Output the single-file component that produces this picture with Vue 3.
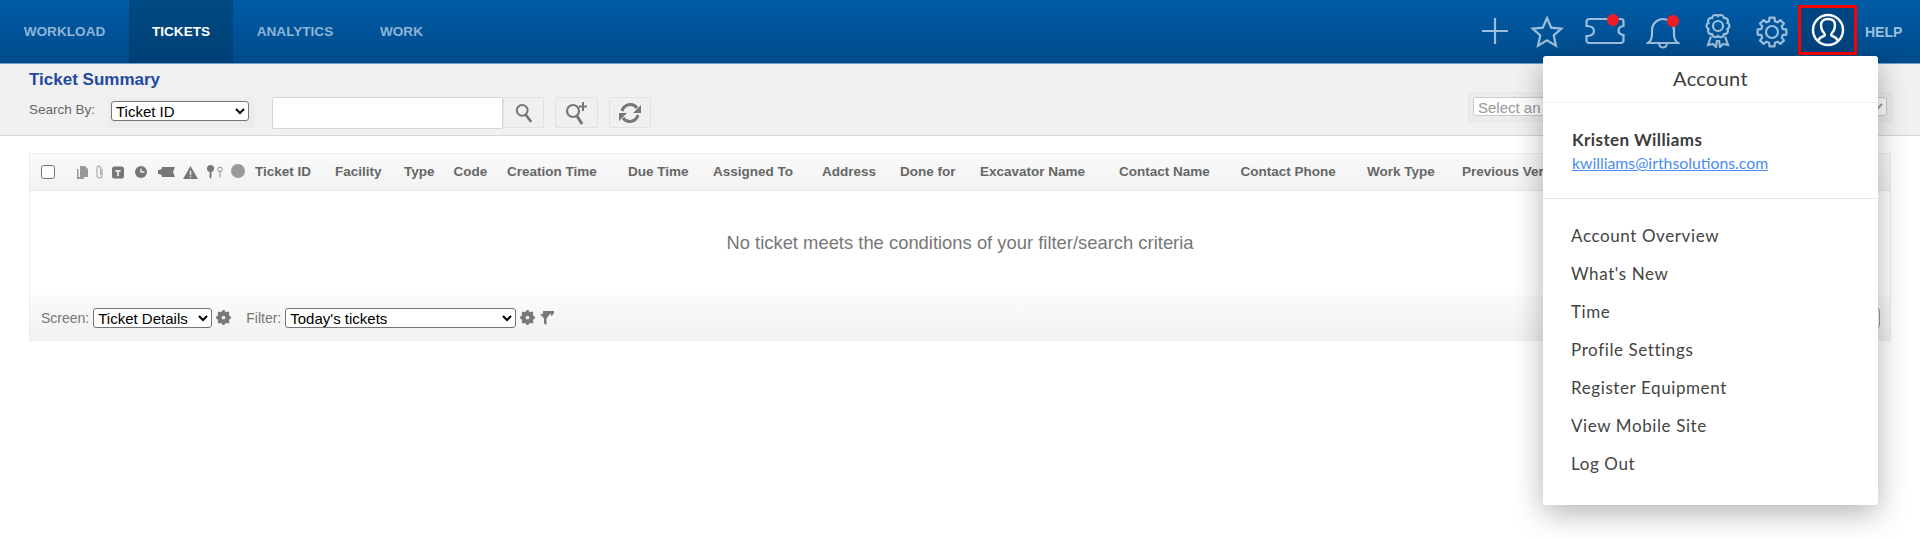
<script setup>
const nav = [
  { label: 'WORKLOAD', width: 129 },
  { label: 'TICKETS', width: 104, active: true },
  { label: 'ANALYTICS', width: 124 },
  { label: 'WORK', width: 89 }
]
const cols = [
  { t: 'Ticket ID', w: 80 },
  { t: 'Facility', w: 69 },
  { t: 'Type', w: 49.5 },
  { t: 'Code', w: 53.5 },
  { t: 'Creation Time', w: 121 },
  { t: 'Due Time', w: 85 },
  { t: 'Assigned To', w: 109 },
  { t: 'Address', w: 78 },
  { t: 'Done for', w: 80 },
  { t: 'Excavator Name', w: 139 },
  { t: 'Contact Name', w: 121.5 },
  { t: 'Contact Phone', w: 126.5 },
  { t: 'Work Type', w: 95 },
  { t: 'Previous Version', w: 150 }
]
const menu = ['Account Overview', "What's New", 'Time', 'Profile Settings', 'Register Equipment', 'View Mobile Site', 'Log Out']

const pt = (cx, cy, r, deg) => {
  const a = (deg * Math.PI) / 180
  return `${(cx + r * Math.cos(a)).toFixed(2)} ${(cy + r * Math.sin(a)).toFixed(2)}`
}
const gearPath = (() => {
  let d = ''
  for (let i = 0; i < 8; i++) {
    const c = i * 45 - 90
    d += `${i ? 'L' : 'M'}${pt(16, 16, 11.2, c - 15)} L${pt(16, 16, 14.6, c - 10)} L${pt(16, 16, 14.6, c + 10)} L${pt(16, 16, 11.2, c + 15)} `
  }
  return d + 'Z'
})()
const rosettePath = (() => {
  let d = `M${pt(13, 12, 10, -90)} `
  for (let i = 1; i <= 10; i++) {
    d += `A3.400 3.400 0 0 1 ${pt(13, 12, 10, -90 + i * 36)} `
  }
  return d + 'Z'
})()
</script>

<template>
  <div class="page">
    <header class="top">
      <nav class="nav">
        <a v-for="n in nav" :key="n.label" class="nav-item" :class="{ active: n.active }" :style="{ width: n.width + 'px' }">{{ n.label }}</a>
      </nav>
      <div class="tools">
        <svg class="ic i-plus" width="32" height="32" viewBox="0 0 32 32"><path d="M16 3v26M3 16h26" /></svg>
        <svg class="ic i-star" width="34" height="34" viewBox="0 0 34 34"><path d="M17 3l4.200 9.600 10.300 1-7.800 6.900 2.300 10.200L17 25.400l-9 5.300 2.300-10.200-7.800-6.900 10.300-1z" /></svg>
        <span class="ic-wrap w-ticket">
          <svg class="ic" width="40" height="28" viewBox="0 0 40 28"><path d="M4 2h32a2.500 2.500 0 0 1 2.500 2.500V9c-4 .5-5 2-5 4.500s1 4 5 4.500v5.500A2.500 2.500 0 0 1 36 26H4a2.500 2.500 0 0 1-2.500-2.500V19c5 0 7.500-2 7.500-5s-2.500-5-7.500-5V4.500A2.500 2.500 0 0 1 4 2z" /></svg>
          <i class="dot d1"></i>
        </span>
        <span class="ic-wrap w-bell">
          <svg class="ic" width="34" height="34" viewBox="0 0 34 34"><path d="M2 28h30c-3-2-4-5-4-9v-4c0-6-5-11-11-11S6 9 6 15v4c0 4-1 7-4 9zM13 28c0 6 8 6 8 0" /></svg>
          <i class="dot d2"></i>
        </span>
        <svg class="ic i-ribbon" width="26" height="34" viewBox="0 0 26 34"><path :d="rosettePath" /><circle cx="13" cy="12" r="5" /><path d="M6 22.500L3 31l5-1 3 3 1-7M20 22.500L23 31l-5-1-3 3-1-7" /></svg>
        <svg class="ic i-gear" width="32" height="32" viewBox="0 0 32 32"><path :d="gearPath" stroke-linejoin="round" /><circle cx="16" cy="16" r="6" /></svg>
        <span class="account">
          <svg width="34" height="34" viewBox="0 0 34 34" fill="none" stroke="#fff" stroke-width="2.400"><circle cx="17" cy="17" r="15" /><path d="M7 28c1-3 3-4 6-5 1-.5 1-2 0-3-2-2-3-5-3-8 0-4 3-6 7-6s7 2 7 6c0 3-1 6-3 8-1 1-1 2.500 0 3 3 1 5 2 6 5" /></svg>
        </span>
        <span class="help">HELP</span>
      </div>
    </header>

    <section class="toolbar">
      <h1 class="title">Ticket Summary</h1>
      <div class="search-row">
        <span class="search-label">Search By:</span>
        <span class="select-well"><select class="sel sel-id"><option>Ticket ID</option></select></span>
        <input class="search-input" type="text" />
        <button class="tbtn b1">
          <svg width="18" height="20" viewBox="0 0 20 22" fill="none" stroke="#777" stroke-width="2.200"><circle cx="8" cy="8" r="6" /><path d="M12 13l6 8" stroke-width="3" /></svg>
        </button>
        <button class="tbtn b2">
          <svg width="26" height="24" viewBox="0 0 26 24" fill="none" stroke="#777" stroke-width="2.200"><circle cx="9" cy="10" r="6" /><path d="M13 15l5 8" stroke-width="3" /><path d="M19 1v9M15 5.500h8" stroke-width="2" /></svg>
        </button>
        <button class="tbtn b3">
          <svg width="24" height="24" viewBox="0 0 24 24" fill="none" stroke="#777" stroke-width="3"><path d="M4 10a8.500 8.500 0 0 1 15-3" /><path d="M20 14a8.500 8.500 0 0 1-15 3" /><path d="M23 4v8h-8zM1 20v-8h8z" fill="#777" stroke="none" /></svg>
        </button>
        <span class="asset-well"><select class="sel asset"><option>Select an</option></select></span>
      </div>
    </section>

    <section class="grid">
      <div class="grid-head">
        <input class="check" type="checkbox" />
        <span class="mini">
          <svg width="11" height="13" viewBox="0 0 11 13" fill="#999"><path d="M0 3h1.500v8H7v2H0zM3 0h5l3 3v8H3z" /></svg>
          <svg width="9" height="14" viewBox="0 0 9 14" fill="none" stroke="#aaa" stroke-width="1.200"><path d="M7 4v6.500a2.500 2.500 0 0 1-5 0V3a1.800 1.800 0 0 1 3.600 0v7" /></svg>
          <svg width="12" height="13" viewBox="0 0 14 14"><rect width="14" height="14" rx="3" fill="#777" /><path d="M4 4h6v2H8v5H6V6H4z" fill="#eee" /></svg>
          <svg width="12" height="12" viewBox="0 0 14 14"><circle cx="7" cy="7" r="7" fill="#777" /><path d="M7 3v4h4" fill="none" stroke="#eee" stroke-width="1.500" /></svg>
          <svg width="17" height="10" viewBox="0 0 17 10" fill="#777"><path d="M4 0h13l-2 5 2 5H4c0-2-1-3-4-3V3c3 0 4-1 4-3z" /></svg>
          <svg width="15" height="13" viewBox="0 0 16 14"><path d="M8 0l8 14H0z" fill="#777" /><path d="M7.200 5h1.600v5H7.200zM7.200 11h1.600v1.500H7.200z" fill="#eee" /></svg>
          <svg width="7" height="14" viewBox="0 0 7 14" fill="#777"><circle cx="3.500" cy="3.500" r="3.500" /><path d="M2.500 6h2v6l-1 2-1-2z" /></svg>
          <svg width="6" height="14" viewBox="0 0 8 15" fill="none" stroke="#888" stroke-width="1.200"><circle cx="4" cy="4" r="3" /><path d="M4 7v8" /></svg>
          <svg class="ball" width="14" height="14" viewBox="0 0 15 15"><circle cx="7.500" cy="7.500" r="7.500" fill="#999" /></svg>
        </span>
        <span v-for="c in cols" :key="c.t" class="col" :style="{ width: c.w + 'px' }">{{ c.t }}</span>
      </div>
      <div class="grid-empty">No ticket meets the conditions of your filter/search criteria</div>
      <div class="grid-foot">
        <span class="foot-label">Screen:</span>
        <select class="sel sel-screen"><option>Ticket Details</option></select>
        <svg class="gear" width="15" height="15" viewBox="0 0 16 16"><circle cx="8" cy="8" r="5" fill="none" stroke="#777" stroke-width="3.500" /><path d="M8 0v16M0 8h16M2.300 2.300l11.400 11.400M13.700 2.300L2.300 13.700" stroke="#777" stroke-width="2.400" /><circle cx="8" cy="8" r="2" fill="#eee" /></svg>
        <span class="foot-label filter">Filter:</span>
        <select class="sel sel-filter"><option>Today's tickets</option></select>
        <svg class="gear" width="15" height="15" viewBox="0 0 16 16"><circle cx="8" cy="8" r="5" fill="none" stroke="#777" stroke-width="3.500" /><path d="M8 0v16M0 8h16M2.300 2.300l11.400 11.400M13.700 2.300L2.300 13.700" stroke="#777" stroke-width="2.400" /><circle cx="8" cy="8" r="2" fill="#eee" /></svg>
        <svg class="funnel" width="14" height="15" viewBox="0 0 14 15" fill="#777"><path d="M0 4h10L6.500 8.500V15L4 13.500V8.500zM3 1h11v2l-2.500 3.500L11 4H3z" /></svg>
        <span class="pager"></span>
      </div>
    </section>

    <aside class="panel">
      <div class="panel-head">Account</div>
      <div class="panel-user">
        <div class="user-name">Kristen Williams</div>
        <a class="user-mail">kwilliams@irthsolutions.com</a>
      </div>
      <ul class="panel-menu">
        <li v-for="m in menu" :key="m">{{ m }}</li>
      </ul>
    </aside>
  </div>
</template>

<style>
html, body { margin: 0; background: #fff; overflow: hidden; }
</style>

<style scoped>
.page {
  position: relative;
  width: 1920px;
  height: 538px;
  overflow: hidden;
  font-family: "Liberation Sans", Arial, sans-serif;
  background: #fff;
}
.top {
  height: 63px;
  display: flex;
  justify-content: space-between;
  background: linear-gradient(#005ba6, #004b8b);
  border-bottom: 1px solid #6f9fc8;
}
.nav { display: flex; }
.nav-item {
  display: flex;
  align-items: center;
  justify-content: center;
  font-size: 13.600px;
  font-weight: 700;
  color: #8fb4d6;
}
.nav-item.active {
  color: #fff;
  background: linear-gradient(#004a84, #003f75);
}
.tools { display: flex; align-items: center; }
.ic { fill: none; stroke: #9dbfdc; stroke-width: 2.200; display: block; }
.i-plus { margin-right: 19px; margin-top: -2px; }
.i-star { margin-right: 21px; }
.ic-wrap { position: relative; display: block; }
.w-ticket { margin-right: 21px; margin-top: -1px; }
.w-bell { margin-right: 25px; }
.i-ribbon { margin-right: 25px; margin-top: -1px; }
.i-gear { margin-right: 10px; }
.dot {
  position: absolute;
  width: 12px;
  height: 12px;
  border-radius: 50%;
  background: #ef1c25;
}
.d1 { right: 6px; top: -3px; }
.d2 { right: 1px; top: 0; }
.account {
  display: flex;
  align-items: center;
  justify-content: center;
  box-sizing: border-box;
  width: 59px;
  height: 50px;
  margin: -3px 8px 0 0;
  border: 3px solid #f00;
  background: #004480;
}
.help {
  width: 55px;
  font-size: 14px;
  font-weight: 700;
  color: #9dbfdc;
}
.toolbar {
  box-sizing: border-box;
  height: 72px;
  padding: 6px 0 0 29px;
  background: #f1f1f1;
  border-bottom: 1px solid #d6d6d6;
}
.title {
  margin: 0;
  font-size: 17px;
  line-height: 19px;
  font-weight: 700;
  color: #1f4aa0;
}
.search-row { display: flex; align-items: flex-start; margin-top: 8px; position: relative; }
.search-label { font-size: 13.500px; color: #666; line-height: 16px; margin-top: 5px; width: 79px; }
.select-well {
  display: block;
  padding: 4px 4px 4px 3px;
  width: 147px;
  height: 31px;
  box-sizing: border-box;
  background: #ececec;
  border-radius: 3px;
}
.sel {
  font-family: "Liberation Sans", Arial, sans-serif;
  font-size: 15px;
  color: #000;
  background: #fff;
  border: 1px solid #767676;
  border-radius: 3px;
  box-sizing: border-box;
  height: 20px;
  padding: 0;
}
.sel-id { width: 138px; }
.search-input {
  box-sizing: border-box;
  width: 231px;
  height: 32px;
  margin-left: 17px;
  border: 1px solid #d6d6d6;
  border-radius: 2px 0 0 2px;
  background: #fff;
}
.tbtn {
  box-sizing: border-box;
  display: flex;
  align-items: center;
  justify-content: center;
  height: 31px;
  padding: 0;
  border: 1px solid #e2e2e2;
  border-radius: 2px;
  background: #f0f0f0;
}
.b1 { width: 41px; }
.b2 { width: 43px; margin-left: 11px; }
.b3 { width: 42px; margin-left: 11px; }
.asset-well {
  position: absolute;
  left: 1439px;
  top: -5px;
  width: 424px;
  height: 30px;
  padding: 4px;
  box-sizing: border-box;
  background: #ececec;
  border: 1px solid #e6e6e6;
  border-radius: 3px;
}
.asset { display: block; width: 414px; height: 19px; color: #999; font-size: 15px; border-color: #ccc; }
.grid {
  margin: 17px 0 0 29px;
  width: 1862px;
  border: 1px solid #eee;
  box-sizing: border-box;
}
.grid-head {
  display: flex;
  align-items: center;
  height: 37px;
  box-sizing: border-box;
  background: linear-gradient(#fafafa, #f2f2f2);
  border-bottom: 1px solid #e3e3e3;
  overflow: hidden;
}
.check { width: 14px; height: 14px; margin: 0 0 0 11px; }
.mini {
  display: flex;
  align-items: center;
  width: 178px;
  margin-left: 22px;
  flex: none;
  box-sizing: border-box;
}
.mini svg:nth-child(1) { margin-right: 7px; }
.mini svg:nth-child(2) { margin-right: 8px; }
.mini svg:nth-child(3) { margin-right: 11px; }
.mini svg:nth-child(4) { margin-right: 11px; }
.mini svg:nth-child(5) { margin-right: 8px; }
.mini svg:nth-child(6) { margin-right: 9px; }
.mini svg:nth-child(7) { margin-right: 3px; }
.mini svg:nth-child(8) { margin-right: 8px; }
.ball { margin-top: -3px; }
.col {
  flex: none;
  white-space: nowrap;
  font-size: 13.500px;
  font-weight: 700;
  color: #666;
  margin-top: -1px;
}
.grid-empty {
  height: 104px;
  display: flex;
  align-items: center;
  justify-content: center;
  font-size: 18.400px;
  color: #777;
  background: #fff;
}
.grid-foot {
  display: flex;
  align-items: center;
  height: 45px;
  padding-left: 11px;
  background: linear-gradient(#fbfbfb, #f1f1f1);
  box-sizing: border-box;
}
.foot-label { font-size: 14px; color: #777; }
.foot-label.filter { margin-left: 15px; }
.sel-screen { width: 119px; height: 20px; margin: 0 4px 0 4px; }
.sel-filter { width: 231px; height: 20px; margin: 0 4px 0 4px; }
.gear { flex: none; }
.funnel { margin-left: 5px; }
.pager {
  margin-left: auto;
  margin-right: 10px;
  width: 24px;
  height: 20px;
  box-sizing: border-box;
  border: 1px solid #999;
  border-radius: 3px;
  background: #fff;
}
.panel {
  position: absolute;
  left: 1543px;
  top: 56px;
  width: 335px;
  height: 449px;
  background: #fff;
  border-radius: 3px;
  box-shadow: 0 8px 30px rgba(0, 0, 0, .3);
  color: #3c3c3c;
  font-family: Lato, "Open Sans", sans-serif;
}
.panel-head {
  height: 47px;
  line-height: 45px;
  text-align: center;
  font-size: 20px;
  letter-spacing: .3px;
  box-sizing: border-box;
  border-bottom: 1px solid #eee;
}
.panel-user {
  box-sizing: border-box;
  height: 96px;
  padding: 26px 29px 0;
  border-bottom: 1px solid #e8e8e8;
}
.user-name { font-weight: 700; font-size: 17px; line-height: 22px; letter-spacing: .4px; }
.user-mail { display: block; color: #4a8bf5; font-size: 15.800px; line-height: 22px; text-decoration: underline; margin-top: 1px; }
.panel-menu { list-style: none; margin: 0; padding: 18px 0 0 28px; }
.panel-menu li { font-size: 17px; height: 38px; line-height: 37px; letter-spacing: .6px; color: #444; }
</style>
